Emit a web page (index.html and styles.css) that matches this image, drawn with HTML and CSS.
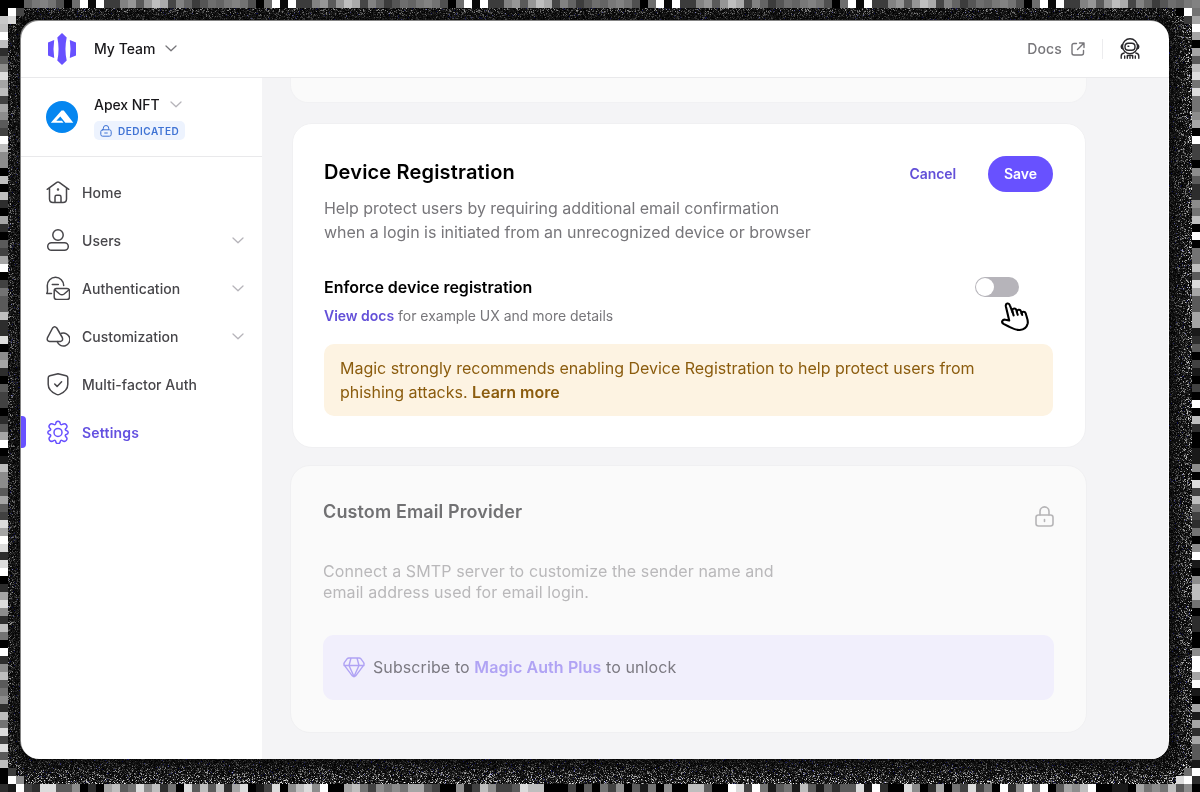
FILE: index.html
```html
<!DOCTYPE html>
<html lang="en">
<head>
<meta charset="utf-8">
<title>Settings</title>
<link rel="stylesheet" href="styles.css">
</head>
<body>
<canvas class="backdrop" id="backdrop" width="1200" height="792"></canvas>
<div class="window">
  <header class="topbar">
    <svg class="logo" width="28" height="32" viewBox="0 0 28 32" fill="#6851ff"><path d="M14 0l4.700 4.500Q16.200 16 18.700 27.500L14 32l-4.700-4.500Q11.800 16 9.300 4.500ZM0 9.500l6.200-2.500Q4.800 16 6.200 25L0 22.500ZM28 9.500l-6.200-2.500Q23.200 16 21.800 25L28 22.500Z"/></svg>
    <span class="team">My Team</span>
    <svg class="chev dark" width="12" height="7" viewBox="0 0 12 7"><path d="M1 1l5 4.700L11 1"/></svg>
    <span class="docs">Docs</span>
    <svg class="external" width="14" height="14" viewBox="0 0 14 14"><path d="M5.500 1.500H3A2 2 0 0 0 1 3.500V11a2 2 0 0 0 2 2h7.500a2 2 0 0 0 2-2V8.500M8.500 1H13v4.500M13 1L6.500 7.500"/></svg>
    <span class="divider"></span>
    <svg class="astronaut" width="20" height="21" viewBox="0 0 20 21"><circle cx="10" cy="8.300" r="7.500"/><path d="M2.700 6.500C.7 7 .7 10.500 2.800 10.800M17.300 6.500c2 .5 2 4-.1 4.300"/><rect x="5" y="5.300" width="10" height="7" rx="3.200"/><path d="M8 8.300h.8M1.200 20.200v-2q0-2.800 3-3.200M18.800 20.200v-2q0-2.800-3-3.200M4.700 20.200V18M15.300 20.200V18M7.300 20.200v-2.700h5.400v2.700M10 19v1.200"/></svg>
  </header>
  <div class="body">
    <aside class="sidebar">
      <div class="app">
        <svg class="avatar" width="32" height="32" viewBox="0 0 32 32"><circle cx="16" cy="16" r="16" fill="#0586f0"/><path d="M4.800 21.700L15.500 9.500h2.300L27.300 21.700h-8L14.300 15.500 10.300 19.800h5.700l1.500 1.900Z" fill="#fff"/></svg>
        <div class="app-info">
          <div class="app-name">Apex NFT <svg class="chev" width="12" height="7" viewBox="0 0 12 7"><path d="M1 1l5 4.700L11 1"/></svg></div>
          <div class="badge"><svg width="12" height="12" viewBox="0 0 12 12"><rect x=".8" y="4.800" width="10.400" height="6.400" rx="1.800"/><path d="M3.300 4.500V3.200a2.700 2.700 0 0 1 5.400 0v1.300M4.700 8h2.600"/></svg>DEDICATED</div>
        </div>
      </div>
      <nav class="nav">
        <a class="item"><svg class="icon" viewBox="0 0 24 24"><path d="M1.200 9.300L10.800 2.300q1.200-.8 2.400 0L22.800 9.300M3.500 8v11q0 3.500 3.500 3.500h10q3.500 0 3.500-3.500V8M9 22.500V17q0-1.700 1.700-1.700h2.600Q15 15.300 15 17v5.500"/><circle cx="12" cy="9.500" r=".5"/></svg><span>Home</span></a>
        <a class="item"><svg class="icon" viewBox="0 0 24 24"><circle cx="12" cy="7" r="5.200"/><rect x="1.700" y="14.700" width="20.600" height="7.600" rx="3.800"/></svg><span>Users</span><svg class="chev" width="12" height="7" viewBox="0 0 12 7"><path d="M1 1l5 4.700L11 1"/></svg></a>
        <a class="item"><svg class="icon" viewBox="0 0 24 24"><path d="M5.500 17.500H.7c1.500-1.500.6-3.500.6-8a8.200 8.200 0 0 1 16.400 0M6.300 8.500h6"/><rect x="8.200" y="12.500" width="15.300" height="11" rx="2.500"/><path d="M9 14l4.700 4q2.200 1.500 4.400 0l4.700-4"/></svg><span>Authentication</span><svg class="chev" width="12" height="7" viewBox="0 0 12 7"><path d="M1 1l5 4.700L11 1"/></svg></a>
        <a class="item"><svg class="icon" viewBox="0 0 24 24"><path d="M6.600 4q2-2.700 4.200 0l5.500 9.500q1.200 3.500-2 4H3.700q-3.200-.5-2.300-3.600Z"/><path d="M15.500 9.300a6.500 6.500 0 1 1-4.300 8.300"/></svg><span>Customization</span><svg class="chev" width="12" height="7" viewBox="0 0 12 7"><path d="M1 1l5 4.700L11 1"/></svg></a>
        <a class="item"><svg class="icon" viewBox="0 0 24 24"><path d="M12 1.700l8.200 2q1.600.5 1.600 2.200v6.300c0 5.500-4.500 8.500-8.300 10.200q-1.500.6-3 0C6.700 20.700 2.200 17.700 2.200 12.200V5.900q0-1.700 1.600-2.200ZM8.700 12l2.400 2.400 4.500-4.700"/></svg><span>Multi-factor Auth</span></a>
        <a class="item active"><svg class="icon" viewBox="0 0 24 24"><path d="M9.700 3.700Q10 1.300 12 1.300t2.300 2.400q.3 1.400 2 .7 2.500-1.600 4 .3 1.700 2.200-.5 3.900-1.200 1.200.4 2 2 .4 2 1.900t-2 2q-1.600.6-.5 2.200 2.200 1.700.6 3.700-1.500 1.800-4 .2-1.700-.7-2 .7-.3 2.400-2.300 2.400t-2.300-2.400q-.3-1.400-2-.7-2.500 1.600-4-.2-1.600-2 .6-3.700 1.100-1.600-.5-2.200-2-.5-2-2t2-1.900q1.600-.8.4-2Q2 6.900 3.700 4.700q1.500-1.900 4-.3 1.700.7 2-.7Z"/><circle cx="12" cy="12.400" r="4"/></svg><span>Settings</span></a>
      </nav>
    </aside>
    <main class="content">
      <section class="peek"></section>
      <section class="card">
        <div class="card-head">
          <h2>Device Registration</h2>
          <div class="actions"><a class="cancel">Cancel</a><a class="save">Save</a></div>
        </div>
        <p class="desc">Help protect users by requiring additional email confirmation<br>when a login is initiated from an unrecognized device or browser</p>
        <div class="setting">
          <h3>Enforce device registration</h3>
          <div class="toggle"><i></i>
            <svg class="hand" width="31" height="31" viewBox="0 0 31 31"><path d="M9.200 19.500L5.900 5.500c-.7-3.300 3-4.100 4-1.200l2.700 7-.3-1.800c.2-2.400 3.300-2.700 4.100-.3l.5 1.800c-.1-2.500 3.200-3.200 4.100-.7l.7 2.300c-.1-2.200 3.200-2.500 4-.2.700 3.200 2.700 6.800 2 10-.9 3.700-3.800 6.100-7.900 6.600-4.200.4-7.200-1.600-11.100-3.500l-5.200-2.600c-2.800-1.900-.9-4.700 1.800-4.200Z"/><path d="M12.600 11.200l1 3.200M16.900 11.200l.8 2.600M21.600 12.200l.6 1.800"/></svg>
          </div>
        </div>
        <p class="hint"><b>View docs</b> for example UX and more details</p>
        <div class="notice">Magic strongly recommends enabling Device Registration to help protect users from<br>phishing attacks. <b>Learn more</b></div>
      </section>
      <section class="card locked">
        <div class="locked-head">
          <h2>Custom Email Provider</h2>
          <svg class="lock" width="19" height="21" viewBox="0 0 19 21"><rect x="1" y="9" width="17" height="11" rx="2.500"/><path d="M5 9V5.400a4.500 4.500 0 0 1 9 0V9M9.500 13.500v2"/></svg>
        </div>
        <p class="locked-desc">Connect a SMTP server to customize the sender name and<br>email address used for email login.</p>
        <div class="upsell">
          <svg class="gem" width="22" height="21" viewBox="0 0 22 21"><path d="M5.800 1h10.400q1 0 1.600.7l2.700 3.600q1.200 1.800-.1 3.300l-7.700 10.200q-1.700 1.700-3.400 0L1.600 8.600Q.3 7.100 1.500 5.300l2.700-3.600Q4.800 1 5.800 1ZM1 8.500h20M8 1L6 8.500l5 11 5-11L14 1"/></svg>
          <span>Subscribe to <b>Magic Auth Plus</b> to unlock</span>
        </div>
      </section>
    </main>
  </div>
</div>
<script src="backdrop.js"></script>
</body>
</html>
```
FILE: styles.css
```css
* { box-sizing: border-box; }
body { margin: 0; width: 1200px; height: 792px; padding: 21px; overflow: hidden; background: #fff; font-family: Inter, "Liberation Sans", sans-serif; }
h2, h3, p { margin: 0; }
svg { fill: none; flex: none; stroke-linecap: round; stroke-linejoin: round; }
.backdrop { position: absolute; left: 0; top: 0; z-index: -1; }
.window { width: 1148px; height: 738px; border-radius: 18px; overflow: hidden; background: #fff; display: flex; flex-direction: column; box-shadow: -1px -1px 0 0 #858585; }
.topbar { height: 57px; flex: none; border-bottom: 1px solid #e9e9eb; display: flex; align-items: center; padding: 0 29px 1px 27px; }
.logo { fill: #6851ff; }
.team { font-size: 14px; font-weight: 500; color: #18171a; margin: 0 10px 0 18px; width: 61px; white-space: nowrap; }
.chev { stroke: #b6b4ba; stroke-width: 1.3; }
.chev.dark { stroke: #77767a; }
.docs { margin-left: auto; font-size: 14px; font-weight: 500; color: #77767a; letter-spacing: .15px; }
.external { margin-left: 9px; stroke: #77767a; stroke-width: 1.4; }
.divider { width: 1px; height: 20px; background: #ececee; margin: 0 17px; }
.astronaut { stroke: #29282b; stroke-width: 1.4; }
.body { display: flex; flex: 1; min-height: 0; }
.sidebar { width: 241px; flex: none; }
.app { height: 79px; border-bottom: 1px solid #e9e9eb; display: flex; padding: 16px 0 0 25px; }
.avatar { margin-top: 7px; }
.app-info { margin-left: 16px; }
.app-name { display: flex; align-items: center; gap: 10px; height: 21px; font-size: 14px; font-weight: 500; color: #18171a; letter-spacing: -.05px; }
.badge { display: flex; align-items: center; gap: 6px; width: 91px; height: 19px; margin-top: 6px; padding-left: 6px; border-radius: 5px; background: #edf3fe; color: #3f73d4; font-size: 10px; font-weight: 600; letter-spacing: .5px; }
.badge svg { stroke: #3f73d4; stroke-width: 1; }
.nav { padding-top: 11px; }
.item { height: 48px; display: flex; align-items: center; padding: 0 18px 0 25px; font-size: 14px; font-weight: 500; color: #47464a; letter-spacing: .02px; }
.item .icon { width: 24px; height: 24px; margin-right: 12px; stroke: #47464a; stroke-width: 1.5; }
.item .chev { margin-left: auto; }
.item.active { position: relative; color: #6350e0; font-weight: 600; letter-spacing: .2px; }
.item.active::before { content: ""; position: absolute; left: -3px; top: 8px; width: 8px; height: 32px; border-radius: 4px; background: #6851ff; }
.item.active .icon { stroke: #6851ff; }
.content { flex: 1; background: #f4f4f6; padding-left: 30px; display: flex; flex-direction: column; align-items: flex-start; margin-right: 1px; }
.peek { width: 797px; height: 25px; margin-left: -2px; border-radius: 0 0 18px 18px; background: #fafafa; border: 1px solid #f1f1f3; border-top: 0; flex: none; }
.card { width: 794px; height: 325px; margin-top: 20px; border: 1px solid #f0f0f2; border-radius: 20px; background: #fff; padding: 32px 32px 0 31px; flex: none; }
.card-head { display: flex; justify-content: space-between; align-items: flex-start; height: 40px; }
h2 { font-size: 20px; line-height: 32px; font-weight: 600; color: #000; letter-spacing: .17px; }
.actions { display: flex; align-items: center; font-size: 14px; font-weight: 600; }
.cancel { color: #6350d8; font-weight: 600; margin: -1px 32px 0 0; letter-spacing: -.1px; }
.save { width: 65px; height: 36px; border-radius: 18px; line-height: 36px; background: #6851ff; color: #fff; text-align: center; font-weight: 600; }
.desc { font-size: 16px; line-height: 24px; color: #77767a; letter-spacing: -.03px; }
.setting { display: flex; justify-content: space-between; align-items: center; margin-top: 31px; padding-right: 34px; height: 24px; }
h3 { font-size: 16px; font-weight: 600; color: #000; }
.toggle { position: relative; width: 44px; height: 20px; background: #b6b4ba; border-radius: 10px; padding: 1px; }
.toggle i { display: block; width: 18px; height: 18px; border-radius: 50%; background: #fff; }
.hand { position: absolute; left: 25px; top: 24px; fill: #fff; stroke: #000; stroke-width: 2.1; }
.hint { margin-top: 6px; line-height: 22px; font-size: 14px; color: #77767a; letter-spacing: -.02px; }
.hint b { color: #6350d8; font-weight: 600; }
.notice { margin-top: 17px; height: 72px; padding: 12px 16px; border-radius: 10px; background: #fdf3e2; color: #8b5c0e; font-size: 16px; line-height: 24px; white-space: nowrap; letter-spacing: -.015px; }
.notice b { font-weight: 600; }
.locked { width: 797px; height: 268px; margin: 17px 0 0 -2px; padding: 30px 32px 0 32px; background: #fafafa; }
.locked-head { display: flex; justify-content: space-between; }
.locked h2 { font-size: 18px; color: #717173; letter-spacing: .12px; }
.lock { margin-top: 10px; stroke: #b6b5b7; stroke-width: 1.6; }
.locked-desc { margin-top: 33px; font-size: 16px; line-height: 21px; color: #b9b8ba; letter-spacing: .1px; }
.upsell { height: 65px; margin-top: 32px; padding-bottom: 1px; border-radius: 11px; background: #f1effc; display: flex; align-items: center; padding-left: 20px; gap: 8px; font-size: 16px; color: #7c7a82; letter-spacing: .1px; }
.upsell b { font-weight: 600; color: #b0a3f4; }
.gem { stroke: #b0a3f4; stroke-width: 1.4; }
```
FILE: backdrop.js
```js
const ctx = document.getElementById('backdrop').getContext('2d');
let seed = 4177;
const rnd = () => { seed = (seed * 1664525 + 1013904223) >>> 0; return seed / 4294967296; };
const shades = [0, 25, 45, 65, 90, 115, 140, 165, 190, 220, 255, 0];
const topRow = [60, 85, 110, 100, 120, 130, 115, 80, 0, 110, 255, 10, 255, 60, 60, 130, 150, 90, 150, 190, 170, 70, 130, 100];
const fillTile = (x, y, g) => {
  ctx.fillStyle = `rgb(${g},${g},${g})`;
  ctx.fillRect(x, y, 8, 8);
};
const tile = (x, y) => fillTile(x, y, shades[Math.floor(rnd() * shades.length)]);

for (let i = 0; i < 150; i++) {
  fillTile(i * 8, 0, i < 3 ? 0 : topRow[i % 24]);
  tile(i * 8, 784);
}
for (let y = 8; y < 792; y += 8) { tile(0, y); tile(1192, y); }
fillTile(0, 8, 0); fillTile(0, 16, 200); fillTile(0, 24, 190); fillTile(0, 32, 255);

// Speckled shadow ring between the tiles and the window.
ctx.fillStyle = '#111113';
ctx.fillRect(8, 8, 1184, 776);
for (let y = 8; y < 784; y++) {
  for (let x = 8; x < 1192; x++) {
    const inX = Math.max(0, 36 - x, x - 1154), inY = Math.max(0, 36 - y, y - 744);
    if (!inX && !inY) continue;
    const edge = Math.min(1, Math.max(0, (Math.hypot(inX, inY) - 10) / 29));
    const g = Math.floor(Math.pow(rnd(), 6 - edge * 1.5) * 250 * edge + rnd() * 22);
    const tint = rnd() > .985 ? 60 : 0;
    ctx.fillStyle = `rgb(${g},${g},${g + tint})`;
    ctx.fillRect(x, y, 1, 1);
  }
}

// Stepped corners of the ring.
fillTile(8, 8, 255); fillTile(16, 8, 70); fillTile(8, 16, 215);
fillTile(1184, 8, 255); fillTile(1176, 8, 0); fillTile(1184, 16, 60);
fillTile(8, 776, 255); fillTile(16, 776, 140); fillTile(8, 768, 60);
fillTile(1184, 776, 255); fillTile(1176, 776, 220); fillTile(1184, 768, 110);
```
